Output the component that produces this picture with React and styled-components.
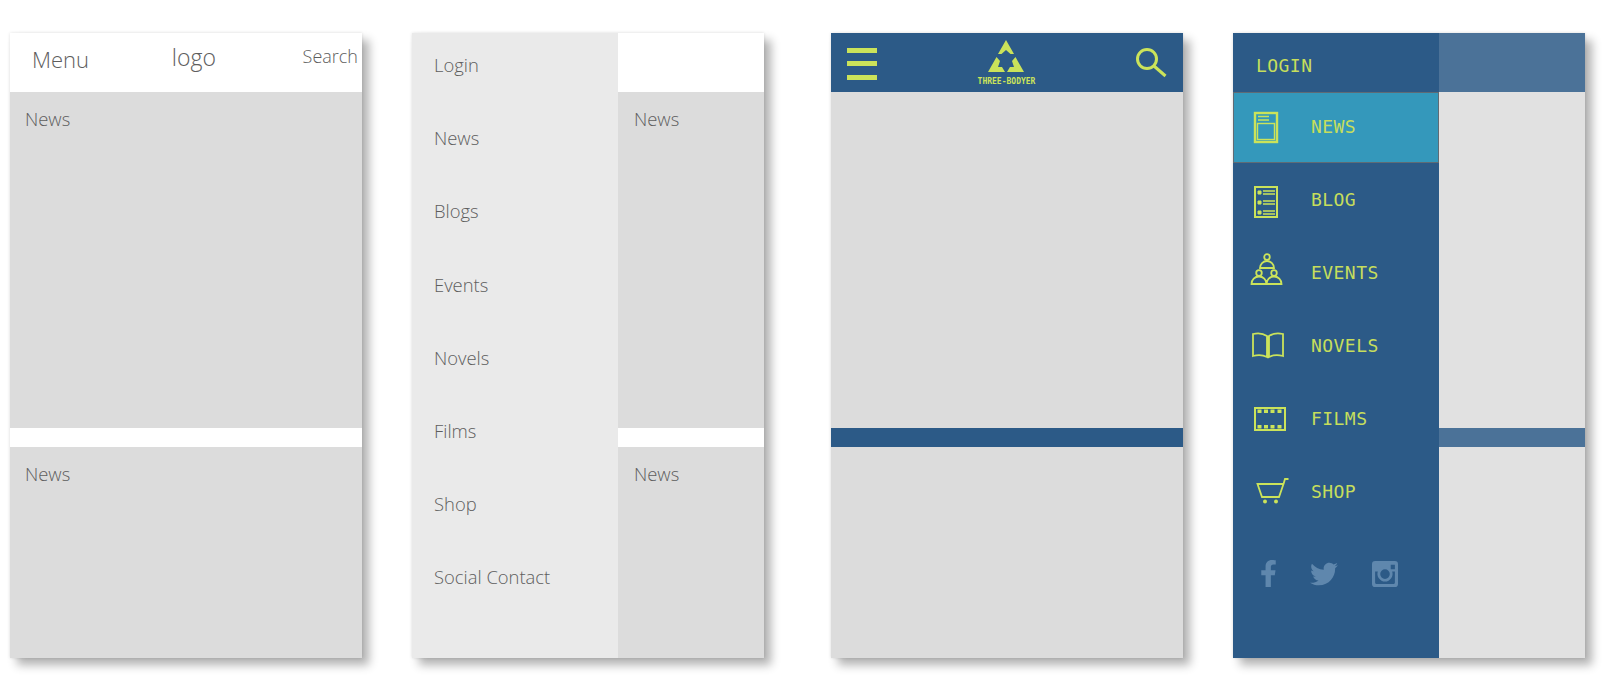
import styled, { createGlobalStyle } from 'styled-components'
import { FaFacebookF, FaTwitter } from 'react-icons/fa'

const LIME = '#cbe35a'
const NAVY = '#2c5a87'

const GlobalStyle = createGlobalStyle`
  body {
    margin: 0;
    padding: 0;
    background: #fff;
  }
`

const Board = styled.div`
  display: flex;
  gap: 67px;
  height: 696px;
  box-sizing: border-box;
  padding: 33px 0 0 10px;
  font-family: "Open Sans", "Liberation Sans", sans-serif;
  color: #5e5e5e;
`

const Pair = styled.div`
  display: flex;
  gap: 50px;
`

const Phone = styled.div`
  display: flex;
  width: 352px;
  height: 625px;
  box-shadow: 7px 7px 9px rgba(0, 0, 0, 0.3), 0 0 3px rgba(0, 0, 0, 0.12);
`

const Main = styled.div`
  position: relative;
  flex: 1;
  min-width: 0;
  display: flex;
  flex-direction: column;
  background: ${p => p.$bar};

  &::after {
    content: '';
    display: ${p => (p.$dimmed ? 'block' : 'none')};
    position: absolute;
    inset: 0;
    background: rgba(255, 255, 255, 0.15);
  }
`

const Header = styled.header`
  height: 59px;
  flex: none;
  display: flex;
  align-items: center;
  justify-content: space-between;
  padding: ${p => p.$padding};
  box-sizing: border-box;
`

const HeaderWord = styled.span`
  font-size: ${p => p.$size}px;
  font-weight: 300;
  line-height: 30px;
  margin-top: ${p => p.$shift}px;
  margin-right: ${p => p.$after || 0}px;
`

const Card = styled.section`
  height: ${p => p.$height}px;
  flex: none;
  background: #dcdcdc;
  padding: 13.5px 0 0 ${p => p.$inset}px;
  box-sizing: border-box;
  font-size: 18.4px;
  font-weight: 300;
  line-height: 26px;
  &:last-child { margin-top: 19px; }
`

const PlainDrawer = styled.nav`
  width: 206px;
  flex: none;
  background: #eaeaea;
  display: flex;
  flex-direction: column;
  gap: 47.2px;
  padding: 19px 0 0 22px;
  box-sizing: border-box;
  font-size: 18.4px;
  font-weight: 300;
  line-height: 26px;
`

const Hamburger = styled.div`
  width: 30px;
  display: flex;
  flex-direction: column;
  gap: 8.5px;
  margin-top: 2px;
`

const Bar = styled.i`
  display: block;
  height: 5px;
  background: ${LIME};
`

const Brand = styled.div`
  display: flex;
  flex-direction: column;
  align-items: center;
`

const BrandName = styled.span`
  font-family: "DejaVu Sans Mono", "Liberation Mono", monospace;
  font-size: 8px;
  font-weight: 700;
  line-height: 9px;
  margin-top: 4px;
  color: ${LIME};
`

const ColorDrawer = styled.nav`
  width: 206px;
  flex: none;
  background: ${NAVY};
  display: flex;
  flex-direction: column;
  font-family: "DejaVu Sans Mono", "Liberation Mono", monospace;
  font-size: 18px;
  letter-spacing: 0.45px;
  color: #c6de5c;
`

const LoginRow = styled.div`
  height: 59px;
  flex: none;
  display: flex;
  align-items: center;
  padding: 6px 0 0 23px;
  box-sizing: border-box;
`

const MenuRow = styled.div`
  height: ${p => (p.$active ? 71 : 73.2)}px;
  flex: none;
  margin-bottom: ${p => (p.$active ? 2 : 0)}px;
  display: flex;
  align-items: center;
  gap: 24px;
  padding: 0 0 ${p => (p.$active ? 3 : 5)}px 18px;
  box-sizing: border-box;
  background: ${p => (p.$active ? '#3498bb' : 'transparent')};
  box-shadow: ${p => (p.$active ? 'inset 0 0 0 1px #5f6b75' : 'none')};
`

const MenuIcon = styled.svg`
  width: 36px;
  height: 36px;
  flex: none;
  overflow: visible;
  fill: none;
  stroke: ${LIME};
  stroke-width: 2.4;
`

const Socials = styled.div`
  display: flex;
  align-items: center;
  margin: 29px 0 0 22px;
  color: #5f87ad;
  gap: 28px;

  svg:last-child {
    margin-left: 6px;
  }
`

const LineIcon = styled.svg`
  display: block;
  overflow: visible;
  fill: none;
  stroke: ${LIME};
`

const FilledIcon = styled.svg`
  display: block;
  overflow: visible;
  fill: ${LIME};
`

const MENU_ICONS = {
  news: (
    <>
      <rect x="4" y="5" width="22" height="29" />
      <rect x="6.5" y="15.5" width="17" height="16" strokeWidth="1.4" />
      <path d="M7 8.5h11M7 12h11" strokeWidth="1.5" />
    </>
  ),
  blog: (
    <>
      <rect x="4" y="6" width="22" height="30" strokeWidth="2" />
      <path d="M7 10h3v3H7zM7 20h3v3H7zM7 30h3v3H7z" fill={LIME} strokeWidth="1" />
      <path d="M12 10h12M12 13h12M12 20h12M12 23h12M12 30h12M12 33h12" strokeWidth="1.5" />
    </>
  ),
  events: (
    <>
      <circle cx="16" cy="3" r="2.8" strokeWidth="1.8" />
      <path d="M9 14a7 7 0 0 1 14 0z" strokeWidth="1.8" />
      <circle cx="8" cy="19" r="2.8" strokeWidth="1.8" />
      <circle cx="23" cy="19" r="2.8" strokeWidth="1.8" />
      <path d="M0.5 30a7.5 7.5 0 0 1 15 0zM15.5 30a7.5 7.5 0 0 1 15 0z" strokeWidth="1.8" />
    </>
  ),
  novels: (
    <>
      <path d="M16 9Q10 5 2 7V29Q10 27 16 30ZM18 9Q24 5 32 7V29Q24 27 18 30Z" strokeWidth="1.8" />
      <path d="M17 9V31" strokeWidth="2" />
    </>
  ),
  films: (
    <>
      <rect x="4" y="7" width="30" height="22" strokeWidth="2" />
      <path d="M6.5 8.5h4v3.5h-4zM13 8.5h4v3.5h-4zM19.5 8.5h4v3.5h-4zM26.5 8.5h4v3.5h-4zM6.5 24h4v3.5h-4zM13 24h4v3.5h-4zM19.5 24h4v3.5h-4zM26.5 24h4v3.5h-4z" fill={LIME} stroke="none" />
    </>
  ),
  shop: (
    <>
      <path d="M6.5 10H32.5L28 23H11ZM32.5 10L34 5H37.5" strokeWidth="1.8" />
      <circle cx="14" cy="27.5" r="2" fill={LIME} stroke="none" />
      <circle cx="25" cy="27.5" r="2" fill={LIME} stroke="none" />
    </>
  ),
}

const MENU = [
  { label: 'NEWS', icon: 'news', active: true },
  { label: 'BLOG', icon: 'blog' },
  { label: 'EVENTS', icon: 'events' },
  { label: 'NOVELS', icon: 'novels' },
  { label: 'FILMS', icon: 'films' },
  { label: 'SHOP', icon: 'shop' },
]

const PLAIN_MENU = ['Login', 'News', 'Blogs', 'Events', 'Novels', 'Films', 'Shop', 'Social Contact']

function Cards({ label, inset = 15 }) {
  return (
    <>
      <Card $height={336} $inset={inset}>{label}</Card>
      <Card $height={211} $inset={inset}>{label}</Card>
    </>
  )
}

function BrandMark() {
  return (
    <FilledIcon width="38" height="33" viewBox="0 0 38 33">
      <path d="M19 0L27 14H23.5L19 10L14.5 14H11Z" />
      <path d="M9.5 17L1 32H18L15 27H11L13 21Z" />
      <path d="M28.5 17L37 32H20L23 27H27L25 21Z" />
    </FilledIcon>
  )
}

function InstagramIcon() {
  return (
    <svg width="26" height="26" viewBox="0 0 25 25" fill="currentColor">
      <path
        fillRule="evenodd"
        d="M3 0H22A3 3 0 0 1 25 3V22A3 3 0 0 1 22 25H3A3 3 0 0 1 0 22V3A3 3 0 0 1 3 0ZM3 10V21A1 1 0 0 0 4 22H21A1 1 0 0 0 22 21V10H19.4A7.3 7.3 0 1 1 5.6 10ZM12.5 8A4.6 4.6 0 1 0 12.5 17.2A4.6 4.6 0 1 0 12.5 8ZM18 3.5V8H22V3.5Z"
      />
    </svg>
  )
}

export default function App() {
  return (
    <>
      <GlobalStyle />
      <Board>
        <Pair>
          <Phone>
            <Main $bar="#fff">
              <Header $padding="0 4px 0 22px">
                <HeaderWord $size={22} $shift={-8}>Menu</HeaderWord>
                <HeaderWord $size={23} $shift={-12} $after={4}>logo</HeaderWord>
                <HeaderWord $size={18} $shift={-13}>Search</HeaderWord>
              </Header>
              <Cards label="News" />
            </Main>
          </Phone>

          <Phone>
            <PlainDrawer>
              {PLAIN_MENU.map(item => <span key={item}>{item}</span>)}
            </PlainDrawer>
            <Main $bar="#fff">
              <Header $padding="0" />
              <Cards label="News" inset={16} />
            </Main>
          </Phone>
        </Pair>

        <Pair>
          <Phone>
            <Main $bar={NAVY}>
              <Header $padding="0 17px 0 16px">
                <Hamburger>
                  <Bar />
                  <Bar />
                  <Bar />
                </Hamburger>
                <Brand>
                  <BrandMark />
                  <BrandName>THREE-BODYER</BrandName>
                </Brand>
                <LineIcon width="30" height="30" viewBox="0 0 30 30" strokeWidth="3">
                  <circle cx="11" cy="11" r="9.5" />
                  <path d="M18 18L29.5 28" />
                </LineIcon>
              </Header>
              <Cards />
            </Main>
          </Phone>

          <Phone>
            <ColorDrawer>
              <LoginRow>LOGIN</LoginRow>
              {MENU.map(item => (
                <MenuRow key={item.label} $active={item.active}>
                  <MenuIcon viewBox="0 0 36 36">{MENU_ICONS[item.icon]}</MenuIcon>
                  <span>{item.label}</span>
                </MenuRow>
              ))}
              <Socials>
                <FaFacebookF size={27} />
                <FaTwitter size={28} />
                <InstagramIcon />
              </Socials>
            </ColorDrawer>
            <Main $bar={NAVY} $dimmed>
              <Header $padding="0" />
              <Cards />
            </Main>
          </Phone>
        </Pair>
      </Board>
    </>
  )
}
